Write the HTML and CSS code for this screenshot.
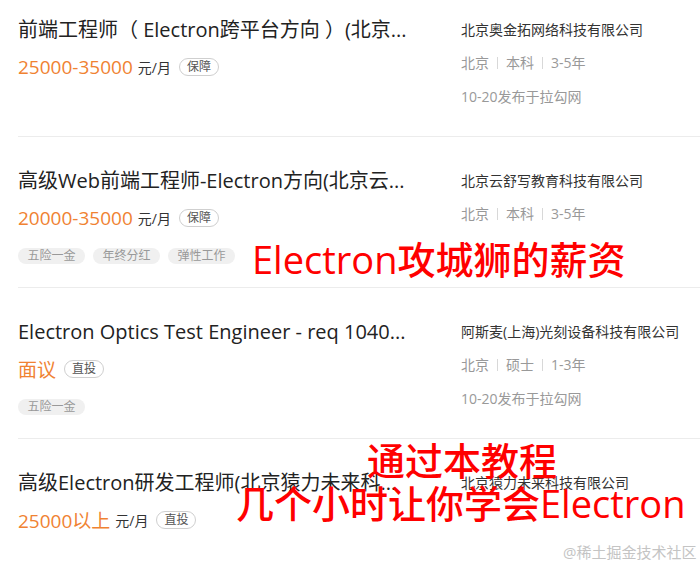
FILE: index.html
```html
<!DOCTYPE html>
<html lang="zh-CN">
<head>
<meta charset="utf-8">
<title>Electron 职位</title>
<link rel="stylesheet" href="styles.css">
</head>
<body>
<div class="page">
  <div class="list">
    <div class="job first">
      <div class="main">
        <div class="title">前端工程师（ Electron跨平台方向 ）(北京...</div>
        <div class="pay"><span class="salary">25000-35000</span><span class="unit">元/月</span><span class="badge">保障</span></div>
        <div class="tags"></div>
      </div>
      <div class="side">
        <div class="company">北京奥金拓网络科技有限公司</div>
        <div class="meta">北京<span class="sep"></span>本科<span class="sep"></span>3-5年</div>
        <div class="date">10-20发布于拉勾网</div>
      </div>
    </div>
    <div class="job">
      <div class="main">
        <div class="title">高级Web前端工程师-Electron方向(北京云...</div>
        <div class="pay"><span class="salary">20000-35000</span><span class="unit">元/月</span><span class="badge">保障</span></div>
        <div class="tags"><span class="tag">五险一金</span><span class="tag">年终分红</span><span class="tag">弹性工作</span></div>
      </div>
      <div class="side">
        <div class="company">北京云舒写教育科技有限公司</div>
        <div class="meta">北京<span class="sep"></span>本科<span class="sep"></span>3-5年</div>
      </div>
    </div>
    <div class="job">
      <div class="main">
        <div class="title">Electron Optics Test Engineer - req 1040...</div>
        <div class="pay"><span class="salary">面议</span><span class="badge">直投</span></div>
        <div class="tags"><span class="tag">五险一金</span></div>
      </div>
      <div class="side">
        <div class="company">阿斯麦(上海)光刻设备科技有限公司</div>
        <div class="meta">北京<span class="sep"></span>硕士<span class="sep"></span>1-3年</div>
        <div class="date">10-20发布于拉勾网</div>
      </div>
    </div>
    <div class="job">
      <div class="main">
        <div class="title">高级Electron研发工程师(北京猿力未来科...</div>
        <div class="pay"><span class="salary">25000以上</span><span class="unit">元/月</span><span class="badge">直投</span></div>
        <div class="tags"></div>
      </div>
      <div class="side">
        <div class="company">北京猿力未来科技有限公司</div>
      </div>
    </div>
  </div>
  <div class="overlay ov-salary">Electron攻城狮的薪资</div>
  <div class="overlay ov-course">通过本教程</div>
  <div class="overlay ov-learn">几个小时让你学会Electron</div>
  <div class="watermark">@稀土掘金技术社区</div>
</div>
</body>
</html>
```

FILE: styles.css
```css
* { box-sizing: border-box; }

body {
  margin: 0;
  background: #fff;
  font-family: "Open Sans", "Noto Sans CJK SC", sans-serif;
}

.page {
  position: relative;
  width: 700px;
  height: 567px;
  overflow: hidden;
}

.list {
  display: flex;
  flex-direction: column;
  padding-left: 18px;
}

.job {
  display: flex;
  padding: 30px 0 23px 0;
  border-bottom: 1px solid #ececec;
}

.job.first {
  padding-top: 16px;
}

.main {
  flex: none;
  width: 443px;
  display: flex;
  flex-direction: column;
}

.title {
  font-size: 20px;
  line-height: 28px;
  color: #222;
  white-space: nowrap;
  overflow: hidden;
  padding-right: 20px;
}

.pay {
  display: flex;
  align-items: center;
  height: 28px;
  margin-top: 9px;
}

.salary {
  font-size: 19px;
  color: #f08232;
}

.unit {
  font-size: 14px;
  color: #333;
  margin-left: 5px;
}

.badge {
  margin-left: 8px;
  font-size: 12px;
  color: #555;
  border: 1px solid #cfcfcf;
  border-radius: 9px;
  padding: 0 7px;
  height: 18px;
  line-height: 16px;
}

.tags {
  display: flex;
  gap: 8px;
  height: 16px;
  margin-top: 16px;
}

.tag {
  background: #f0f0f0;
  color: #999;
  font-size: 12px;
  line-height: 16px;
  padding: 0 9.5px;
  border-radius: 8px;
}

.side {
  flex: 1;
  display: flex;
  flex-direction: column;
}

.company {
  font-size: 14px;
  line-height: 28px;
  color: #333;
  white-space: nowrap;
}

.meta {
  display: flex;
  align-items: center;
  font-size: 14px;
  line-height: 28px;
  color: #999;
  margin-top: 5px;
}

.sep {
  width: 1px;
  height: 12px;
  background: #d8d8d8;
  margin: 0 8px;
}

.date {
  font-size: 14px;
  line-height: 28px;
  color: #999;
  margin-top: 6px;
}

.overlay {
  position: absolute;
  color: #f00;
  font-size: 38px;
  font-weight: 500;
  line-height: 38px;
  white-space: nowrap;
}

.ov-salary { left: 252px; top: 240px; }
.ov-course { left: 367px; top: 441px; }
.ov-learn { left: 236px; top: 484px; }

.watermark {
  position: absolute;
  left: 563px;
  top: 545px;
  font-size: 15px;
  line-height: 15px;
  color: #c4c4c4;
  white-space: nowrap;
}
```
